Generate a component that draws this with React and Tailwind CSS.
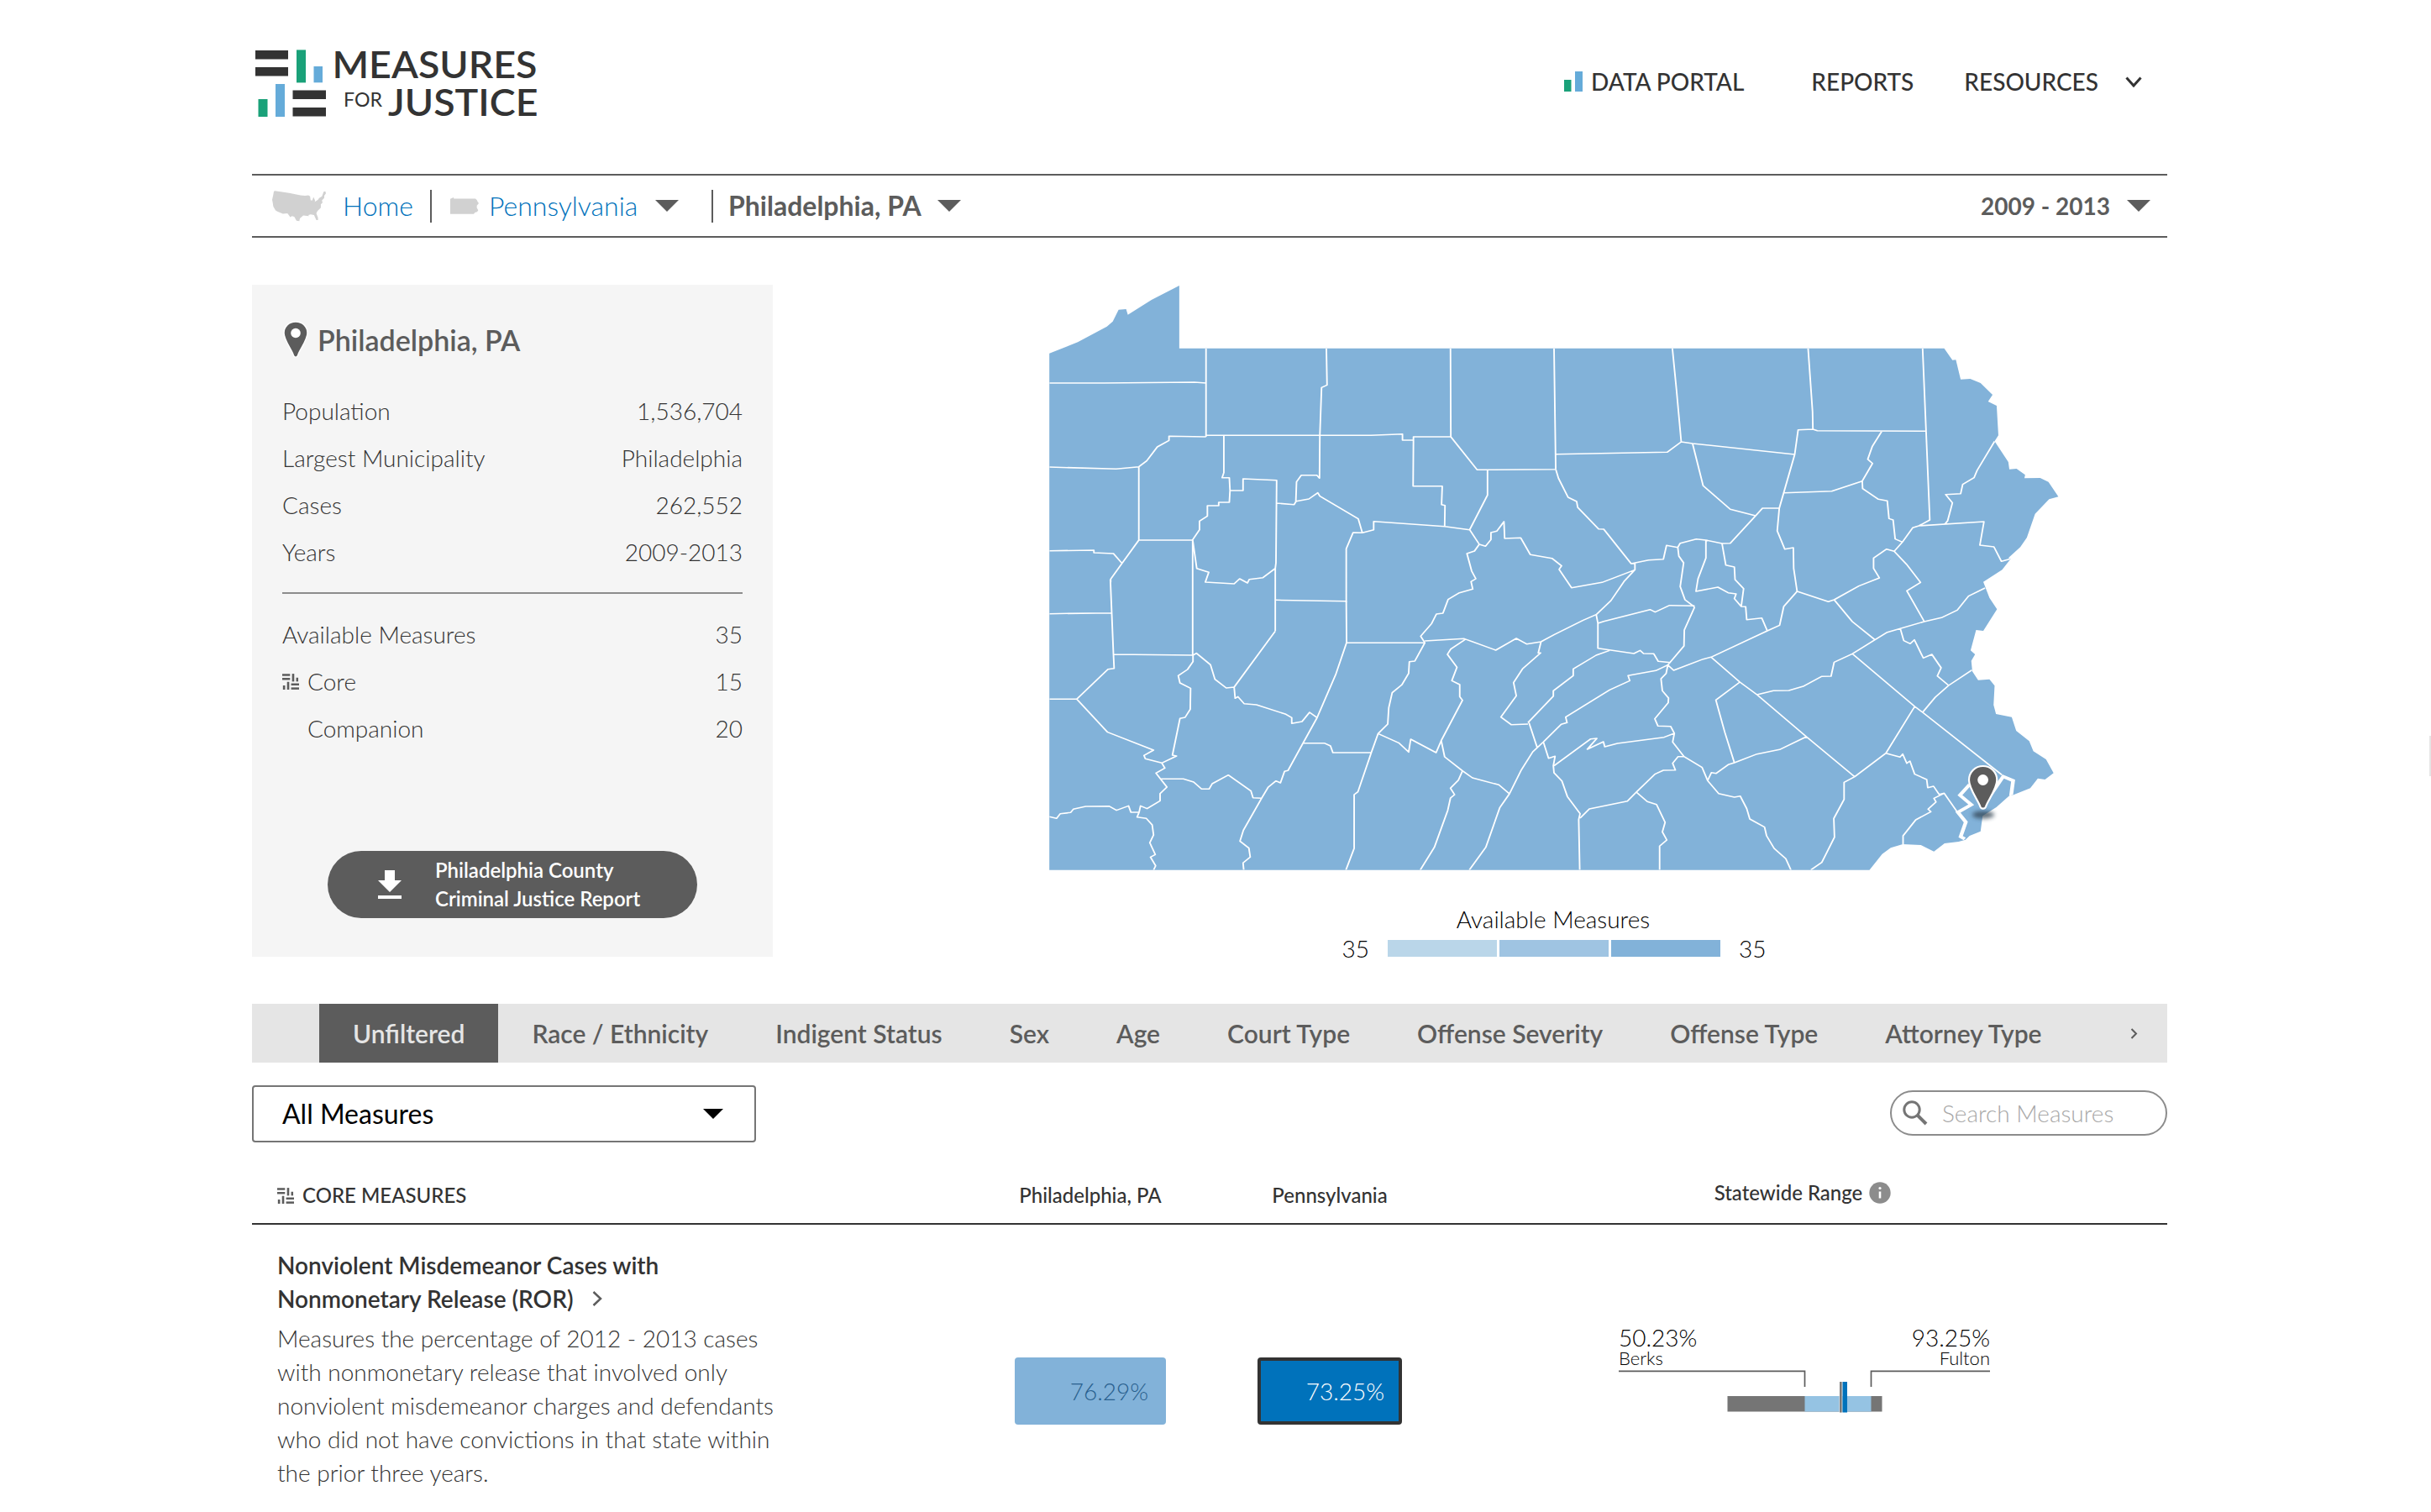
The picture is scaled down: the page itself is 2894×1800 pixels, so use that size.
const STATE_OUTLINE =
  "M47 272 130 232 215 176 232 158 249 116 271 114 276 134 345 81 426 30 426 254 2657 254 2681 296 2691 295 2705 365 2733 363 2763 378 2798 420 2785 444 2810 459 2815 565 2804 586 2844 660 2847 686 2868 684 2893 706 2891 718 2937 717 2961 731 2990 784 2963 793 2922 845 2898 930 2879 964 2844 1003 2851 1006 2826 1045 2771 1088 2789 1145 2811 1186 2771 1263 2750 1260 2734 1333 2747 1347 2736 1370 2739 1408 2756 1439 2789 1436 2804 1459 2801 1528 2808 1560 2854 1571 2867 1620 2905 1657 2917 1693 2954 1722 2976 1771 2951 1794 2930 1790 2908 1825 2859 1849 2847 1852 2809 1893 2769 1924 2763 1979 2731 1995 2719 2009 2699 2016 2658 2022 2627 2051 2589 2028 2536 2025 2501 2038 2476 2060 2439 2117 47 2117Z";

const COUNTIES_NW = [
  "M47 378 205 378 470 375 504 378",
  "M504 254V570",
  "M855 254 857 385 841 394 836 565 835 718 827 707 782 707 768 731 766 800",
  "M1217 254 1218 570",
  "M1519 254 1524 686",
  "M504 565 836 565 985 565 1077 560 1077 582 1109 582 1109 570 1218 570 1295 688 1523 686",
  "M504 570 396 568 396 583 362 606 331 656 308 677 242 685 47 678",
  "M308 677V939H465M308 939 259 1022 226 1078 226 1090",
  "M47 977 177 975 177 984 234 987 259 1022",
  "M556 565V698L551 716 572 716 574 762 572 804 541 804 541 816 508 816 508 853 485 871 485 902 465 938 477 1040 512 1054 502 1089 586 1095 602 1077 625 1092 630 1079 670 1073 706 1040",
  "M574 762H612V720L710 725 708 1020 706 1040 706 1264",
  "M708 807 761 812 767 800 804 792 830 770 836 782 948 863 960 913",
  "M465 938V1350",
  "M913 1160V970L933 912 960 913 993 902 993 872 1200 890 1273 902 1301 954 1319 961 1335 937 1335 912 1352 907 1373 873 1375 933 1422 931 1450 991 1513 1004 1541 1031 1534 1043",
  "M1109 582 1108 746 1193 746 1191 812 1201 815 1200 890",
  "M1325 688V778L1273 902",
  "M1301 954 1287 978 1265 987 1279 1050 1291 1077 1277 1087 1282 1114 1243 1127 1210 1151 1195 1200 1176 1203 1162 1237 1130 1282 1142 1305",
].join("");

const COUNTIES_SW = [
  "M47 122 227 119",
  "M225 0 234 267 466 270M234 267 236 317 218 320 127 427 47 427",
  "M706 73 913 77",
  "M706 184 586 384 563 387 530 356 517 304 476 263 466 270 466 293 450 321 423 343 428 369 459 388 458 463 443 492 428 496 406 627 418 630 375 655 327 640 323 628 351 609 217 545 127 427",
  "M375 655 384 673 358 691 390 741 370 764 370 790 332 818 313 808 309 830 303 848 330 853 347 876 351 912 340 940 356 982 342 991 357 1022 351 1037",
  "M309 830 285 831 278 808 243 824 221 809 153 810 117 820 109 832 79 836 68 853 47 847",
  "M370 712H438L468 723 491 748 513 748 522 729 569 698 635 755 641 779 666 781",
  "M586 384 589 424 597 418 615 443 651 447 737 481 754 493 754 514 784 507 806 474 828 493",
  "M913 77 914 225 882 340 828 493 787 584 743 682 733 685 721 726 708 719 685 742 666 781 613 895 603 934 629 959 633 991 612 1012 614 1037",
  "M914 226H1142L1113 291 1097 293 1095 335 1075 376 1047 404 1037 458 1034 516 1006 550 986 618 947 758 936 768 936 960 912 1037",
  "M787 584H849L867 594 874 618H986",
  "M1006 550 1066 583 1095 616 1101 570 1175 618 1190 575 1252 431 1244 418 1244 375 1221 361 1236 313 1208 267 1218 248 1261 213",
  "M1142 219 1257 211 1349 252 1409 210 1439 230 1481 222 1519 197 1604 145 1642 125",
  "M1481 222 1473 262 1480 262 1427 319 1401 368 1409 415 1364 491 1394 518 1443 516M1446 511 1470 600",
  "M1443 511 1517 416 1517 397 1575 343 1575 319 1642 270 1681 253",
  "M1190 575 1200 633 1252 683 1281 708 1358 733 1389 765",
  "M1252 683 1240 716 1217 745 1229 768 1217 780 1209 824 1170 956 1129 1037",
  "M1272 1037 1320 956 1361 814 1389 765 1424 679 1457 615 1488 580 1540 517 1557 511 1553 491 1681 394 1740 361 1735 343 1816 325 1851 305",
  "M1488 580 1503 638 1522 631 1517 665 1519 690 1542 719 1558 775 1595 836 1591 857 1594 1037",
].join("");

const COUNTIES_NE = [
  "M345 252 357 400 371 588 404 594 702 633",
  "M5 632 330 625 371 588",
  "M5 686 13 718 41 786 66 801 69 822 130 899 145 900 225 1023 236 1023 236 1045 140 1090 51 1109 14 1042",
  "M404 594 435 745 514 829 588 852",
  "M741 254 754 480 755 543 712 545 702 633 657 825 608 825 588 852 514 950 490 951 443 939 415 935 368 950 361 965 328 958 319 1007 276 1010 225 1023",
  "M755 543 768 548 1084 550",
  "M1075 254 1096 867 1064 888 1046 895 1016 946 992 979 970 971 932 1003 932 1040 949 1074 889 1103 817 1152 800 1159 709 1122",
  "M956 550 928 605 915 650 929 665 899 728 810 764 671 770",
  "M899 728 900 755 946 793 972 799 977 862 989 867 995 935 1016 946",
  "M657 825 651 906 673 971 698 966 699 1040 709 1122",
  "M1285 586 1234 690 1225 716 1192 740 1186 773 1142 776 1162 806 1148 870 1140 882",
  "M1064 888 1254 873 1242 957 1283 963 1305 1015 1332 1006",
  "M992 979 1028 1025 1069 1090 1029 1120 1080 1230",
  "M361 965 364 996 378 1020 368 1105 382 1152 410 1178",
  "M443 939V1003L420 1077 414 1122 478 1107 508 1127 531 1131 526 1148 546 1176 559 1177 562 1223 606 1217 622 1263",
  "M490 951 501 1028 526 1035 528 1080 553 1112 546 1176",
  "M236 1045 204 1087 166 1155 123 1205",
].join("");

const COUNTIES_SE = [
  "M123 125 128 156V245L233 264 251 253 261 264 291 265 304 292 340 296",
  "M128 156 145 149 280 107 295 116 337 92 410 94",
  "M410 98 380 180 379 237 332 305 349 324 435 284 458 277 622 183 658 163 670 96 709 42",
  "M458 277 542 366 592 411 736 561 877 704",
  "M542 366 472 430 498 545 526 654",
  "M592 411 640 397 685 396 729 380 780 346 808 345 817 295 870 265 936 215 972 188 1080 150 1130 136 1176 109 1209 59 1257 30",
  "M817 72 870 150 936 215",
  "M870 265 1052 453 1075 474 1306 697",
  "M1010 175 1020 218 1039 229 1051 215 1077 280 1102 267 1129 315 1118 344 1151 378",
  "M1219 323 1151 378 1112 420 1075 474",
  "M1052 453 968 620 877 704 846 724 846 785 816 853 818 920 781 1010 749 1037",
  "M968 620 1009 634 1017 623 1029 656 1038 648 1052 695 1087 714 1090 743 1107 738 1123 767 1138 763 1176 830",
  "M1138 763 1108 781 1114 794 1091 820 1099 829 1055 858 1018 915V945",
  "M332 305 327 335 312 354 316 397 334 423 333 440 294 497 303 523 340 524 351 549 346 580 379 632 432 671 448 718 480 764 526 777 543 773 562 818 571 855 614 884 620 915 642 960 676 997 691 1037",
  "M448 718 459 689 473 692 508 661 526 654 592 623 658 607 736 561",
  "M0 665 107 569 125 567 97 606 144 579 148 597 185 585 321 563 351 549",
  "M379 632 362 632 346 656 354 680 319 681 294 695 240 759 214 791 103 819 76 852",
  "M240 759 272 793 299 803 324 867 316 901 329 930 308 952V1037",
].join("");

const PHILADELPHIA =
  "M1198 926 1186 918 1201 866 1178 831 1217 804 1184 770 1212 732M1270 775 1310 703 1339 718 1333 772";

function PennsylvaniaMap() {
  return (
    <svg width="1240" height="722" viewBox="1230 339 1240 722">
      <defs>
        <filter id="pinShadow" x="-50%" y="-100%" width="200%" height="300%">
          <feGaussianBlur stdDeviation="2.5" />
        </filter>
        <clipPath id="stateClip">
          <path d={STATE_OUTLINE} />
        </clipPath>
      </defs>
      <g transform="translate(1230 330) scale(0.408163 0.333333)" fill="none" strokeLinejoin="round">
        <path d={STATE_OUTLINE} fill="#82b2d9" />
        <g clipPath="url(#stateClip)" stroke="#fff" strokeWidth="4.6">
          <path d={COUNTIES_NW} />
          <path d={COUNTIES_SW} transform="translate(0 1080)" />
          <path d={COUNTIES_NE} transform="translate(1519 0)" />
          <path d={COUNTIES_SE} transform="translate(1519 1080)" />
          <path d={PHILADELPHIA} transform="translate(1519 1080)" strokeWidth="11" strokeLinejoin="miter" />
        </g>
      </g>
      <ellipse cx="2361" cy="970" rx="13" ry="4.5" fill="#2d4050" opacity="0.75" filter="url(#pinShadow)" />
      <path
        d="M2360.6 912C2369.8 912 2377.3 919 2377.3 928.8C2377.3 939 2366.5 953 2364 960.3C2362.8 963.4 2358.6 963.4 2357.4 960.3C2355 953 2344 939 2344 928.8C2344 919 2351.5 912 2360.6 912Z"
        fill="#5c5c5c"
        stroke="#fff"
        strokeWidth="2.2"
      />
      <circle cx="2360.6" cy="928.5" r="6.4" fill="#fff" />
    </svg>
  );
}

const LOGO_BARS = [
  [0, 1, 39, 10.5, "#333333"],
  [0, 21, 39, 10.5, "#333333"],
  [49, 0.4, 11, 39, "#1aa179"],
  [69.5, 20, 10.5, 19.3, "#65abd9"],
  [3.5, 59, 11, 21, "#1aa179"],
  [24, 41, 11, 39, "#65abd9"],
  [44.5, 48.5, 39.5, 10.5, "#333333"],
  [44.5, 69, 39.5, 10.5, "#333333"],
];

function LogoBars({ mono }) {
  return LOGO_BARS.map(([x, y, w, h, c]) => (
    <rect key={`${x}-${y}`} x={x} y={y} width={w} height={h} fill={mono ? "#5c5c5c" : c} />
  ));
}

function Logo() {
  return (
    <svg width="348" height="110" viewBox="0 -14 348 110" fill="#333333" fontFamily="Lato, sans-serif">
      <LogoBars />
      <text x="91.5" y="34" fontSize="43.5" fontWeight="600" textLength="244" lengthAdjust="spacingAndGlyphs">
        MEASURES
      </text>
      <text x="105" y="67.5" fontSize="24" textLength="46" lengthAdjust="spacingAndGlyphs">
        FOR
      </text>
      <text x="158" y="78.5" fontSize="43.5" fontWeight="600" textLength="178.5" lengthAdjust="spacingAndGlyphs">
        JUSTICE
      </text>
    </svg>
  );
}

function CoreIcon() {
  return (
    <svg width="20" height="19" viewBox="0 0 84 80" preserveAspectRatio="none" className="shrink-0">
      <LogoBars mono />
    </svg>
  );
}

function Triangle({ width = 28, height = 14, className = "fill-[#5c5c5c]" }) {
  return (
    <svg width={width} height={height} viewBox="0 0 28 14" preserveAspectRatio="none" className={className}>
      <path d="M0 0H28L14 14Z" />
    </svg>
  );
}

function Chevron({ width, height, down, stroke, color }) {
  return (
    <svg width={width} height={height} viewBox={`0 0 ${width} ${height}`} fill="none" stroke={color} strokeWidth={stroke}>
      {down ? (
        <path d={`M1.5 1.5 ${width / 2} ${height - 2} ${width - 1.5} 1.5`} />
      ) : (
        <path d={`M1.5 1 ${width - 2} ${height / 2} 1.5 ${height - 1}`} />
      )}
    </svg>
  );
}

function UsaIcon() {
  return (
    <svg width="64" height="37" viewBox="0 0 190 110" preserveAspectRatio="none" fill="#d1d1d1">
      <path d="M10 1 60 8 100 16 116 18 128 16 134 20 136 34 142 34 146 22 152 36 150 40 162 32 166 26 176 20 182 4 188 2 190 10 184 18 184 26 176 34 178 42 172 48 172 60 160 72 156 80 162 96 162 104 156 104 148 86 136 84 128 86 130 90 110 88 98 98 96 108 86 106 78 92 70 90 64 94 54 80 38 82 20 74 12 70 4 56 2 42 0 32 4 14 6 2Z" />
    </svg>
  );
}

function PaIcon() {
  return (
    <svg width="34" height="20" viewBox="0 0 102 58" preserveAspectRatio="none" fill="#d1d1d1">
      <path d="M0 5 12 0 13 4 90 4 96 10 97 14 102 20 95 28 95 36 100 44 96 50 88 52 84 57 0 57Z" />
    </svg>
  );
}

function StatRow({ label, value, icon, indent }) {
  return (
    <div className="flex h-14 items-center justify-between">
      <span className="flex items-center">
        {icon && (
          <span className="mr-[10px] flex">
            <CoreIcon />
          </span>
        )}
        <span className={indent ? "ml-[30px]" : ""}>{label}</span>
      </span>
      <span>{value}</span>
    </div>
  );
}

function CountyPanel() {
  return (
    <section className="flex h-[800px] w-[620px] flex-col bg-[#f5f5f5] px-9 pt-10 pb-[46px] text-[28px] font-light text-[#333333]">
      <h1 className="flex h-[50px] items-center text-[34px] font-semibold text-[#5c5c5c]">
        <svg width="32" height="48" viewBox="0 0 32 48" className="mr-[10px]">
          <path
            d="M16 3C24.3 3 30 8.800 30 16.500C30 25 20.500 36.500 18.600 43C17.600 46 14.400 46 13.400 43C11.500 36.500 2 25 2 16.500C2 8.800 7.700 3 16 3Z"
            fill="#5c5c5c"
            stroke="#fff"
            strokeWidth="1.5"
          />
          <circle cx="16" cy="16.500" r="5.800" fill="#fff" />
        </svg>
        Philadelphia, PA
      </h1>
      <div className="mt-8">
        <StatRow label="Population" value="1,536,704" />
        <StatRow label="Largest Municipality" value="Philadelphia" />
        <StatRow label="Cases" value="262,552" />
        <StatRow label="Years" value="2009-2013" />
      </div>
      <hr className="my-5 border-t-2 border-[#8c8c8c]" />
      <StatRow label="Available Measures" value="35" />
      <StatRow label="Core" value="15" icon />
      <StatRow label="Companion" value="20" indent />
      <button className="mt-auto ml-[54px] flex h-20 w-[440px] items-center rounded-full bg-[#5c5c5c] pl-[60px] text-left text-2xl leading-[34px] font-semibold text-white">
        <svg width="28" height="34" viewBox="0 0 28 34" fill="#fff" className="mr-10 shrink-0">
          <path d="M8 0H20V12H28L14 26L0 12H8Z" />
          <rect y="30" width="28" height="4" />
        </svg>
        <span>
          Philadelphia County
          <br />
          Criminal Justice Report
        </span>
      </button>
    </section>
  );
}

const TABS = [
  "Unfiltered",
  "Race / Ethnicity",
  "Indigent Status",
  "Sex",
  "Age",
  "Court Type",
  "Offense Severity",
  "Offense Type",
  "Attorney Type",
];

function RangeChart() {
  return (
    <div className="mt-[116px] w-[442px] font-light text-black">
      <div className="flex justify-between text-[28px] leading-9">
        <span>50.23%</span>
        <span>93.25%</span>
      </div>
      <div className="-mt-[5px] flex justify-between text-[22px] leading-6">
        <span>Berks</span>
        <span>Fulton</span>
      </div>
      <svg width="442" height="55" viewBox="1927 1629 442 55" fill="none">
        <path d="M1927 1632.300H2148.500V1651M2369 1632.300H2227.500V1651" stroke="#5c5c5c" strokeWidth="1.700" />
        <rect x="2056.500" y="1662" width="184" height="18.500" fill="#757575" />
        <rect x="2148.500" y="1662" width="79" height="18.500" fill="#95c3e3" />
        <rect x="2189.500" y="1645" width="4" height="36.500" fill="#d9d9d9" />
        <rect x="2190.500" y="1645" width="1.800" height="36.500" fill="#5c5c5c" />
        <rect x="2193.500" y="1645" width="5.500" height="36.500" fill="#0072bb" />
      </svg>
    </div>
  );
}

export default function App() {
  return (
    <div className="relative h-[1800px] w-[2894px] overflow-hidden bg-white font-['Lato',sans-serif] text-[#333333]">
      <div className="ml-[300px] w-[2280px]">
        <header className="flex h-[207px] items-start justify-between pt-[45px] pl-1">
          <Logo />
          <nav className="mt-[14px] flex h-[76px] items-center gap-20 pr-[30px] text-[28px] font-medium">
            <span className="flex items-center">
              <svg width="22" height="24" viewBox="0 0 22 24" className="mr-[10px]">
                <rect y="10" width="8.500" height="14" fill="#1aa179" />
                <rect x="13" width="9" height="24" fill="#65abd9" />
              </svg>
              DATA PORTAL
            </span>
            <span>REPORTS</span>
            <span className="-ml-5 flex items-center gap-8">
              RESOURCES
              <Chevron width={20} height={13} down stroke={3} color="#333333" />
            </span>
          </nav>
        </header>

        <div className="flex h-[76px] items-center border-y-2 border-[#5c5c5c] text-[32px] font-light text-[#0072bb]">
          <span className="ml-6 flex w-[84px]">
            <UsaIcon />
          </span>
          <span className="w-[104px]">Home</span>
          <span className="h-[39px] w-[2px] bg-[#5c5c5c]" />
          <span className="ml-[22px] flex">
            <PaIcon />
          </span>
          <span className="ml-3 w-[178px]">Pennsylvania</span>
          <span className="ml-[20px]">
            <Triangle />
          </span>
          <span className="ml-[39px] h-[39px] w-[2px] bg-[#5c5c5c]" />
          <span className="ml-[18px] w-[249px] font-bold text-[#5c5c5c]">Philadelphia, PA</span>
          <Triangle />
          <span className="ml-auto text-[28px] font-bold text-[#5c5c5c]">2009 - 2013</span>
          <span className="mr-5 ml-5">
            <Triangle />
          </span>
        </div>

        <div className="mt-14 flex">
          <CountyPanel />
          <section className="ml-[309px] flex w-[1240px] flex-col items-center text-[28px] font-light text-black">
            <div className="ml-[2px]">
              <PennsylvaniaMap />
            </div>
            <div className="mt-4 leading-[34px]">Available Measures</div>
            <div className="mt-2 ml-[2px] flex h-5 items-center leading-5">
              <span className="mr-[22px]">35</span>
              <span className="flex h-5 gap-[3px]">
                <span className="w-[130px] bg-[#bad6e9]" />
                <span className="w-[130px] bg-[#9fc4e2]" />
                <span className="w-[130px] bg-[#82b2d9]" />
              </span>
              <span className="ml-[22px]">35</span>
            </div>
          </section>
        </div>

        <div className="mt-14 flex h-[70px] items-center bg-[#e5e5e5] pr-[35px] pl-20 text-[30px] font-semibold text-[#5c5c5c]">
          {TABS.map((tab, i) => (
            <span
              key={tab}
              className={
                i === 0
                  ? "flex h-full items-center bg-[#5c5c5c] px-10 text-[#e5e5e5]"
                  : "flex h-full items-center px-10"
              }
            >
              {tab}
            </span>
          ))}
          <span className="ml-auto">
            <Chevron width={9} height={13} stroke={2} color="#5c5c5c" />
          </span>
        </div>

        <div className="mt-[27px] flex h-[68px] items-center justify-between">
          <div className="flex h-full w-[600px] items-center justify-between rounded-[4px] border-2 border-[#757575] pr-[37px] pl-[34px] text-[32px] text-black">
            All Measures
            <Triangle width={24} height={12} className="fill-black" />
          </div>
          <div className="mb-[2px] flex h-[54px] w-[330px] items-center rounded-full border-2 border-[#8c8c8c] pl-[13px] text-[28px] font-light text-[#a8a8a8]">
            <svg width="30" height="30" viewBox="0 0 30 30" fill="none" stroke="#757575" className="mr-[17px]">
              <circle cx="11" cy="11" r="9.200" strokeWidth="3" />
              <path d="M18 18 28 28" strokeWidth="4" />
            </svg>
            Search Measures
          </div>
        </div>

        <div className="grid h-[98px] grid-cols-[868px_260px_310px_820px] items-start border-b-2 border-[#333333] pt-[47px] text-2xl leading-8 font-medium">
          <span className="flex items-center gap-[10px] pl-[30px]">
            <CoreIcon />
            CORE MEASURES
          </span>
          <span className="text-center">Philadelphia, PA</span>
          <span className="text-center">Pennsylvania</span>
          <span className="-mt-[3px] flex items-center justify-center gap-2 pr-1">
            Statewide Range
            <svg width="26" height="26" viewBox="0 0 26 26">
              <circle cx="13" cy="13" r="12.700" fill="#8c8c8c" />
              <path d="M13 11.500V19.500" stroke="#fff" strokeWidth="2.600" />
              <circle cx="13" cy="7.500" r="1.600" fill="#fff" />
            </svg>
          </span>
        </div>

        <div className="grid grid-cols-[868px_260px_310px_820px] items-start">
          <div className="pt-7 pl-[30px] text-[28px] leading-10">
            <h2 className="font-semibold">
              Nonviolent Misdemeanor Cases with
              <br />
              <span className="flex items-center gap-[22px]">
                Nonmonetary Release (ROR)
                <Chevron width={12} height={18} stroke={2.500} color="#5c5c5c" />
              </span>
            </h2>
            <p className="mt-[7px] w-[610px] font-light">
              Measures the percentage of 2012 - 2013 cases
              <br />
              with nonmonetary release that involved only
              <br />
              nonviolent misdemeanor charges and defendants
              <br />
              who did not have convictions in that state within
              <br />
              the prior three years.
            </p>
          </div>
          <div className="mt-[158px] flex h-20 w-[180px] items-center justify-end justify-self-center rounded-[4px] bg-[#82b2d9] pr-[21px] text-[28px] font-light text-[#29608e]">
            76.29%
          </div>
          <div className="mt-[158px] flex h-20 w-[172px] items-center justify-end justify-self-center rounded-[4px] border-4 border-[#333333] bg-[#0072bb] pr-[17px] text-[28px] font-light text-white">
            73.25%
          </div>
          <div className="justify-self-center">
            <RangeChart />
          </div>
        </div>
      </div>
      <div className="absolute top-[876px] right-0 h-12 w-[2px] bg-[#e5e5e5]" />
    </div>
  );
}
